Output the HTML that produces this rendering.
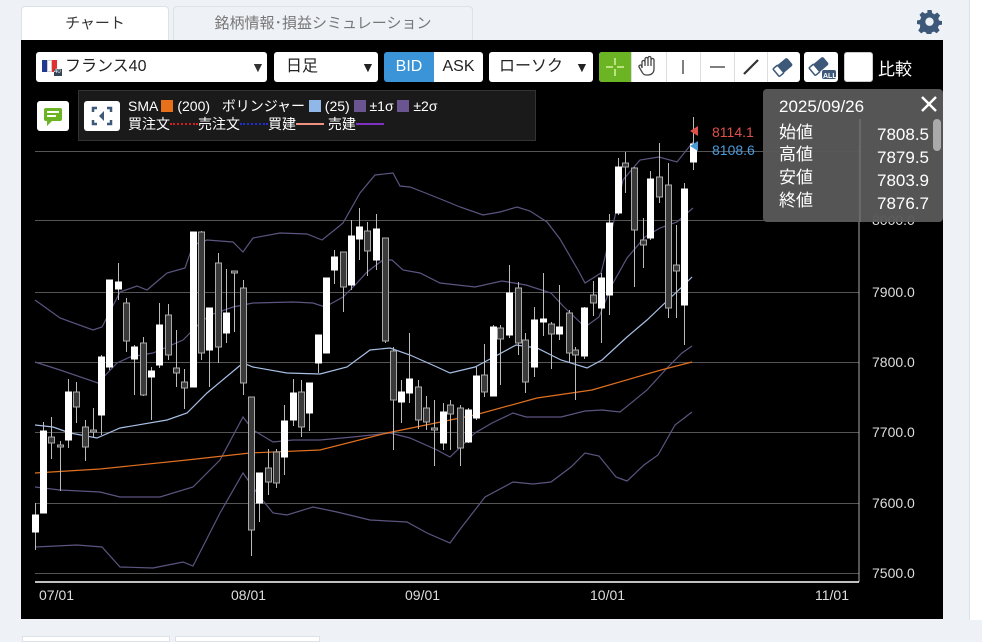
<!DOCTYPE html>
<html><head><meta charset="utf-8"><style>
*{margin:0;padding:0;box-sizing:border-box}
body{width:982px;height:640px;background:#eef1f5;font-family:"Liberation Sans","Noto Sans CJK JP",sans-serif;position:relative;overflow:hidden}
.abs{position:absolute}
.tab{position:absolute;top:6px;height:35px;border:1px solid #dde2e8;border-bottom:none;border-radius:4px 4px 0 0;font-size:15px;text-align:center;line-height:34px}
.btn{position:absolute;top:52px;height:30px;background:#fff;border-radius:3px;font-size:16px;line-height:30px;color:#222}
</style></head><body>
<div class="tab" style="left:21px;width:148px;background:#fff;color:#333">チャート</div>
<div class="tab" style="left:173px;width:300px;background:#eef1f5;color:#777">銘柄情報･損益シミュレーション</div>
<svg class="abs" style="left:917px;top:9px" width="25" height="25" viewBox="0 0 24 24"><path fill="#3d5878" d="M10 1h4l.6 3 2.2 1.1 2.6-1.7 2.8 2.8-1.7 2.6L21 11l3 .6v3.4l-3 .6-1 2.3 1.7 2.6-2.8 2.8-2.6-1.7-2.2 1-.6 3.1h-4l-.6-3-2.3-1-2.6 1.7-2.8-2.8 1.7-2.6L3 15l-3-.6v-3.4l3-.6 1-2.3L2.4 5.5l2.8-2.8 2.6 1.7L10 3.4z M12 8.2a4 4 0 1 0 0.01 0z" fill-rule="evenodd"/></svg>
<div class="abs" style="left:969px;top:0;width:13px;height:620px;background:#fff;border-left:1px solid #dde2e8"></div>
<div class="abs" style="left:21px;top:40px;width:922px;height:579px;background:#000"></div>
<div class="abs" style="left:22px;top:636px;width:148px;height:6px;background:#fff;border:1px solid #dde2e8"></div>
<div class="abs" style="left:175px;top:636px;width:145px;height:6px;background:#fff;border:1px solid #dde2e8"></div>

<div class="btn" style="left:36px;width:231px"><span class="abs" style="left:6px;top:8px;width:5px;height:12px;background:#1f3a93"></span><span class="abs" style="left:11px;top:8px;width:5px;height:12px;background:#fff;border:1px solid #ccc"></span><span class="abs" style="left:16px;top:8px;width:5px;height:12px;background:#e03030"></span><span class="abs" style="left:18px;top:17px;width:8px;height:7px;background:#345;font-size:6px;color:#fff;line-height:7px">40</span><span class="abs" style="left:29px;top:0">フランス40</span><span class="abs" style="left:215px;top:0;font-size:14px;color:#333">▼</span></div>
<div class="btn" style="left:274px;width:104px"><span class="abs" style="left:12px">日足</span><span class="abs" style="left:87px;font-size:14px">▼</span></div>
<div class="btn" style="left:384px;width:50px;background:#3b93d8;color:#fff;border-radius:3px 0 0 3px;text-align:center">BID</div>
<div class="btn" style="left:434px;width:49px;border-radius:0 3px 3px 0;text-align:center">ASK</div>
<div class="btn" style="left:489px;width:104px"><span class="abs" style="left:10px">ローソク</span><span class="abs" style="left:86px;font-size:14px">▼</span></div>
<div class="abs" style="left:599px;top:52px;width:201px;height:30px;background:#fff;border-radius:3px;overflow:hidden">
<div class="abs" style="left:0;top:0;width:32px;height:30px;background:#6bb423"></div>
<svg class="abs" style="left:0;top:0" width="201" height="30">
<g stroke="#d8f0a0" stroke-width="1.5"><line x1="16" y1="6" x2="16" y2="13"/><line x1="16" y1="17" x2="16" y2="24"/><line x1="7" y1="15" x2="14" y2="15"/><line x1="18" y1="15" x2="25" y2="15"/></g>
<g stroke="#ddd"><line x1="32.5" y1="0" x2="32.5" y2="30"/><line x1="67.5" y1="0" x2="67.5" y2="30"/><line x1="101.5" y1="0" x2="101.5" y2="30"/><line x1="135.5" y1="0" x2="135.5" y2="30"/><line x1="168.5" y1="0" x2="168.5" y2="30"/></g>
<path d="M43 16v-6a1.5 1.5 0 0 1 3 0v4-7a1.5 1.5 0 0 1 3 0v7-8a1.5 1.5 0 0 1 3 0v8-6a1.5 1.5 0 0 1 3 0v9c0 4-3 6-6 6h-2c-2 0-3-1-4-3l-3-5a1.5 1.5 0 0 1 2.5-1.5z" fill="none" stroke="#444" stroke-width="1.3"/>
<line x1="84" y1="8" x2="84" y2="22" stroke="#555" stroke-width="1.5"/>
<line x1="111" y1="15" x2="126" y2="15" stroke="#555" stroke-width="1.5"/>
<line x1="145" y1="22" x2="159" y2="8" stroke="#333" stroke-width="2.2"/>
<g transform="translate(184 15) rotate(-40)"><rect x="-9" y="-5" width="18" height="10" rx="2" fill="#3d5878"/><rect x="-9" y="-5" width="6" height="10" rx="1" fill="#fff" stroke="#3d5878" stroke-width="1.5"/></g>
</svg></div>
<div class="abs" style="left:804px;top:52px;width:34px;height:30px;background:#fff;border-radius:3px"><svg width="34" height="30"><g transform="translate(15 14) rotate(-40)"><rect x="-9" y="-5" width="18" height="10" rx="2" fill="#3d5878"/><rect x="-9" y="-5" width="6" height="10" rx="1" fill="#fff" stroke="#3d5878" stroke-width="1.5"/></g><rect x="18" y="18" width="14" height="9" rx="2" fill="#3d5878"/><text x="19" y="26" font-size="7" fill="#fff" font-weight="bold">ALL</text></svg></div>
<div class="abs" style="left:844px;top:52px;width:29px;height:30px;background:#fff;border:1px solid #ccc;border-radius:3px"></div>
<div class="abs" style="left:878px;top:55px;font-size:17px;color:#fff">比較</div>

<div class="abs" style="left:37px;top:101px;width:32px;height:30px;background:#fff;border-radius:3px"><svg width="32" height="30"><rect x="7" y="7" width="18" height="13" rx="2" fill="#6bb423"/><path d="M10 20l0 5 5-5z" fill="#6bb423"/><g stroke="#fff" stroke-width="2"><line x1="10" y1="11" x2="22" y2="11"/><line x1="10" y1="15" x2="19" y2="15"/></g></svg></div>
<div class="abs" style="left:78px;top:90px;width:458px;height:51px;background:#1a1a1a;border:1px solid #333"></div>
<div class="abs" style="left:84px;top:101px;width:36px;height:30px;background:#fff;border-radius:3px"><svg width="36" height="30"><g fill="none" stroke="#3d5878" stroke-width="2.5"><path d="M9 11V7h4M23 7h4v4M27 19v4h-4M13 23H9v-4"/></g><path d="M20 10l-5 5 5 5z" fill="#3d5878"/></svg></div>
<div class="abs" style="left:128px;top:97px;font-size:14px;color:#fff;line-height:18px;white-space:nowrap">SMA <span style="display:inline-block;width:12px;height:12px;background:#e8701a;vertical-align:-1px"></span> (200)&nbsp;&nbsp;&nbsp;ボリンジャー <span style="display:inline-block;width:12px;height:12px;background:#8fb8e8;vertical-align:-1px"></span> (25) <span style="display:inline-block;width:12px;height:12px;background:#6a5590;vertical-align:-1px"></span> ±1σ <span style="display:inline-block;width:12px;height:12px;background:#6a5590;vertical-align:-1px"></span> ±2σ<br>買注文<span style="display:inline-block;width:28px;border-top:2px dotted #d02020;vertical-align:4px"></span>売注文<span style="display:inline-block;width:28px;border-top:2px dotted #2030d0;vertical-align:4px"></span>買建<span style="display:inline-block;width:28px;border-top:2px solid #f09080;vertical-align:4px"></span> 売建<span style="display:inline-block;width:28px;border-top:2px solid #8030c0;vertical-align:4px"></span></div>

<svg class="abs" style="left:0;top:0" width="982" height="640">
<g stroke="#555" stroke-width="1"><line x1="35" y1="151.5" x2="859" y2="151.5"/><line x1="35" y1="220.5" x2="859" y2="220.5"/><line x1="35" y1="292.5" x2="859" y2="292.5"/><line x1="35" y1="362.5" x2="859" y2="362.5"/><line x1="35" y1="432.5" x2="859" y2="432.5"/><line x1="35" y1="503.5" x2="859" y2="503.5"/><line x1="35" y1="573.5" x2="859" y2="573.5"/></g>
<line x1="859" y1="145" x2="859" y2="582" stroke="#aaa"/>
<line x1="35" y1="582" x2="859" y2="582" stroke="#fff" stroke-width="1.5"/>
<g font-size="14" fill="#ddd" font-family="Liberation Sans,sans-serif"><text x="872" y="225">8000.0</text><text x="872" y="297">7900.0</text><text x="872" y="367">7800.0</text><text x="872" y="437">7700.0</text><text x="872" y="508">7600.0</text><text x="872" y="578">7500.0</text>
<text x="39" y="600">07/01</text><text x="231" y="600">08/01</text><text x="405" y="600">09/01</text><text x="590" y="600">10/01</text><text x="815" y="600">11/01</text></g>
<g fill="none" stroke-width="1.2">
<polyline stroke="#5e5480" points="35,300 60,318 93,330 102,327 120,292 137,286 147,290 167,273 185,268 193,245 207,240 233,242 243,252 253,238 280,233 307,234 322,240 337,228 343,223 360,193 375,175 393,173 400,186 410,187 423,192 443,200 460,207 483,215 500,212 517,207 530,211 547,222 560,239 578,270 585,283 601,273 613,225 623,180 640,160 659,157 677,162 693,142"/>
<polyline stroke="#5e5480" points="35,362 60,370 98,383 117,363 130,357 153,353 183,340 200,323 210,315 233,307 253,303 293,302 313,303 325,307 343,297 357,283 367,272 383,260 392,260 403,270 420,273 440,283 475,287 502,281 526,285 551,293 564,307 585,327 599,317 612,285 627,258 645,237 660,228 677,222 693,208"/>
<polyline stroke="#a8c0e6" points="35,425 53,427 70,433 97,438 120,428 167,420 187,413 207,393 243,363 253,367 287,373 320,374 347,367 370,350 390,348 410,355 437,367 450,373 475,367 492,358 516,345 537,348 561,360 587,368 602,360 627,337 647,320 668,300 682,287 692,277"/>
<polyline stroke="#5e5480" points="35,487 60,490 100,492 120,497 160,497 193,487 220,460 243,417 253,430 273,442 293,440 320,440 353,437 390,433 410,438 437,450 450,457 475,433 492,423 513,413 526,417 561,417 585,411 602,410 620,412 647,390 668,367 682,353 692,346"/>
<polyline stroke="#5e5480" points="35,547 77,545 102,547 120,567 153,568 183,562 193,566 220,513 243,473 260,497 273,513 287,515 313,507 337,512 370,520 407,522 427,533 450,543 461,528 485,497 513,482 533,484 551,482 571,467 585,453 599,456 616,477 627,481 644,465 658,455 675,425 692,412"/>
<polyline stroke="#e07020" points="35,473 100,469 187,460 250,453 320,450 387,433 460,418 475,415 537,398 592,390 661,370 692,362"/>
</g>
<g id="c" stroke="#bbb" stroke-width="1"></g>
<path d="M690 131l8-5v10z" fill="#e0504a"/><path d="M690 146l8-5v10z" fill="#4a9ad8"/>
<text x="712" y="137" font-size="14" fill="#e0504a">8114.1</text><text x="712" y="155" font-size="14" fill="#4a9ad8">8108.6</text>
<rect x="763" y="89" width="180" height="133" rx="4" fill="#585858" fill-opacity="0.96"/>
<line x1="860" y1="119" x2="860" y2="222" stroke="#7a7a7a"/>
<rect x="933" y="119" width="8" height="32" rx="4" fill="#aaa"/>
<g fill="#fff" font-size="17"><text x="779" y="112">2025/09/26</text><text x="779" y="138">始値</text><text x="779" y="160">高値</text><text x="779" y="183">安値</text><text x="779" y="206">終値</text>
<g text-anchor="end"><text x="929" y="140">7808.5</text><text x="929" y="163">7879.5</text><text x="929" y="186">7803.9</text><text x="929" y="209">7876.7</text></g></g>
<g stroke="#fff" stroke-width="2.5"><line x1="922" y1="97" x2="936" y2="111"/><line x1="936" y1="97" x2="922" y2="111"/></g>
</svg>
<script>
var d=[[35,503,515,532,550,1],[43,422,431,513,513,1],[51,417,437,443,459,0],[60,441,445,447,491,0],[68,379,392,440,448,1],[76,382,392,407,423,0],[85,420,427,447,461,0],[93,408,430,432,438,0],[101,355,357,415,435,1],[109,280,280,367,370,1],[118,263,282,289,300,1],[126,298,303,341,352,0],[134,345,347,359,395,1],[143,337,343,395,396,0],[151,367,371,377,420,1],[159,303,325,365,368,1],[168,304,315,355,360,0],[176,330,368,373,387,0],[184,369,382,388,409,0],[193,232,232,387,387,1],[201,231,232,353,360,0],[209,308,308,350,387,1],[218,253,263,347,363,0],[226,269,313,333,343,1],[234,272,271,273,332,0],[243,280,288,383,395,0],[251,397,397,530,556,0],[259,473,473,503,522,1],[268,449,468,482,495,0],[276,449,452,483,488,0],[284,405,421,457,475,1],[293,379,393,420,426,1],[301,380,392,427,437,0],[309,383,383,413,431,1],[318,335,335,363,373,1],[326,278,278,353,353,1],[334,250,257,270,284,1],[343,252,252,287,312,0],[351,220,236,285,290,1],[359,208,227,239,260,1],[367,222,231,251,276,0],[376,214,229,260,270,1],[385,238,238,341,343,0],[393,347,351,400,450,0],[401,380,392,402,423,1],[409,333,379,393,403,1],[418,380,387,420,429,0],[426,396,408,422,430,0],[434,400,428,430,466,0],[443,403,412,443,450,1],[450,400,405,414,450,0],[460,405,408,448,466,0],[468,408,410,442,443,1],[476,367,376,418,420,1],[484,344,375,392,397,0],[493,325,327,396,396,1],[500,325,328,339,385,0],[509,265,293,335,338,1],[518,282,288,343,355,0],[525,333,340,382,393,0],[534,307,320,367,377,1],[543,273,319,322,336,1],[551,322,324,334,369,0],[559,285,327,334,340,1],[569,310,313,353,362,0],[575,347,350,355,400,0],[584,307,308,356,359,1],[593,281,295,303,316,0],[601,273,278,308,343,1],[609,214,223,295,315,1],[618,158,167,213,215,1],[625,152,163,167,193,0],[634,167,168,230,287,0],[643,218,240,245,268,0],[650,171,179,238,240,1],[659,143,177,197,203,0],[668,163,185,308,318,0],[676,225,265,271,318,0],[684,183,189,305,345,1],[693,117,144,162,170,1]];
var g=document.getElementById('c'),s='';
d.forEach(function(c){s+='<line x1="'+(c[0]+.5)+'" y1="'+c[1]+'" x2="'+(c[0]+.5)+'" y2="'+c[4]+'"/>';var h=Math.max(c[3]-c[2],2);s+='<rect x="'+(c[0]-2.5)+'" y="'+c[2]+'" width="6" height="'+h+'" fill="'+(c[5]?'#fff':'#3a3a3a')+'" stroke="'+(c[5]?'#fff':'#aaa')+'"/>';});
g.innerHTML=s;
</script>
</body></html>
